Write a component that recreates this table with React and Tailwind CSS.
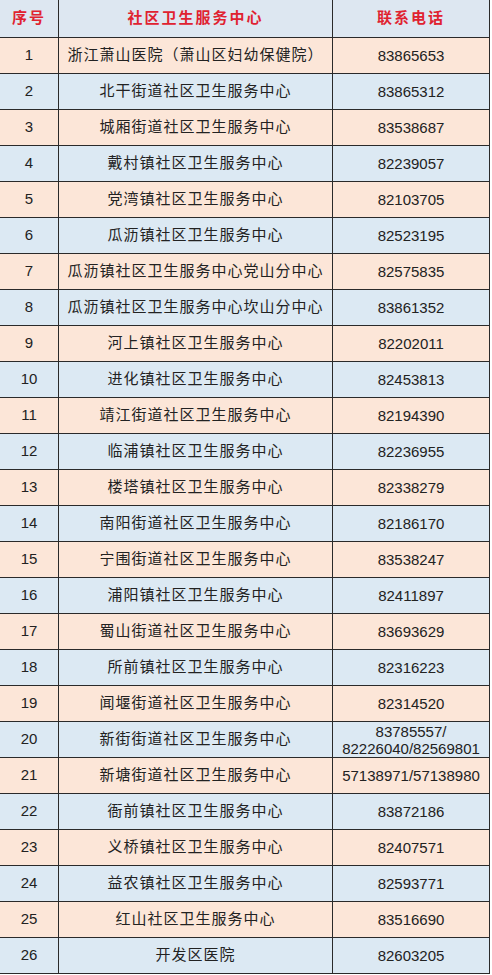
// community health center contact table
import React from 'react';

const rows = [
  ['1', '浙江萧山医院（萧山区妇幼保健院）', ['83865653']],
  ['2', '北干街道社区卫生服务中心', ['83865312']],
  ['3', '城厢街道社区卫生服务中心', ['83538687']],
  ['4', '戴村镇社区卫生服务中心', ['82239057']],
  ['5', '党湾镇社区卫生服务中心', ['82103705']],
  ['6', '瓜沥镇社区卫生服务中心', ['82523195']],
  ['7', '瓜沥镇社区卫生服务中心党山分中心', ['82575835']],
  ['8', '瓜沥镇社区卫生服务中心坎山分中心', ['83861352']],
  ['9', '河上镇社区卫生服务中心', ['82202011']],
  ['10', '进化镇社区卫生服务中心', ['82453813']],
  ['11', '靖江街道社区卫生服务中心', ['82194390']],
  ['12', '临浦镇社区卫生服务中心', ['82236955']],
  ['13', '楼塔镇社区卫生服务中心', ['82338279']],
  ['14', '南阳街道社区卫生服务中心', ['82186170']],
  ['15', '宁围街道社区卫生服务中心', ['83538247']],
  ['16', '浦阳镇社区卫生服务中心', ['82411897']],
  ['17', '蜀山街道社区卫生服务中心', ['83693629']],
  ['18', '所前镇社区卫生服务中心', ['82316223']],
  ['19', '闻堰街道社区卫生服务中心', ['82314520']],
  ['20', '新街街道社区卫生服务中心', ['83785557/', '82226040/82569801']],
  ['21', '新塘街道社区卫生服务中心', ['57138971/57138980']],
  ['22', '衙前镇社区卫生服务中心', ['83872186']],
  ['23', '义桥镇社区卫生服务中心', ['82407571']],
  ['24', '益农镇社区卫生服务中心', ['82593771']],
  ['25', '红山社区卫生服务中心', ['83516690']],
  ['26', '开发区医院', ['82603205']],
];

const font = "font-['Liberation_Sans','Noto_Sans_CJK_SC',sans-serif]";

const App = () => {
  return (
    <div className={`w-[492px] bg-white ${font}`}>
      <div className="w-[490px]">
        <div className="grid grid-cols-[59px_274px_157px] h-[38px] bg-[#dde7f1] border-b border-[#2a2a2a]">
          <div className="flex items-center justify-center border-r border-[#2a2a2a] text-[15px] font-bold text-[#e02230] tracking-[2px]">
            序号
          </div>
          <div className="flex items-center justify-center border-r border-[#2a2a2a] text-[15px] font-bold text-[#e02230] tracking-[2px]">
            社区卫生服务中心
          </div>
          <div className="flex items-center justify-center border-r border-[#2a2a2a] text-[15px] font-bold text-[#e02230] tracking-[2px]">
            联系电话
          </div>
        </div>
        {rows.map(([no, name, phones], i) => (
          <div
            key={no}
            className={`grid grid-cols-[59px_274px_157px] h-[36px] border-b border-[#2a2a2a] text-[#222] ${
              i % 2 === 0 ? 'bg-[#fce6d8]' : 'bg-[#dce9f3]'
            }`}
          >
            <div className="flex items-center justify-center border-r border-[#2a2a2a] text-[15px]">
              {no}
            </div>
            <div className="flex items-center justify-center border-r border-[#2a2a2a] text-[15px] tracking-[1px] whitespace-nowrap">
              {name}
            </div>
            <div className="flex flex-col items-center justify-center border-r border-[#2a2a2a] text-[15px] leading-[17px]">
              {phones.map((p) => (
                <span key={p}>{p}</span>
              ))}
            </div>
          </div>
        ))}
      </div>
    </div>
  );
};

export default App;
